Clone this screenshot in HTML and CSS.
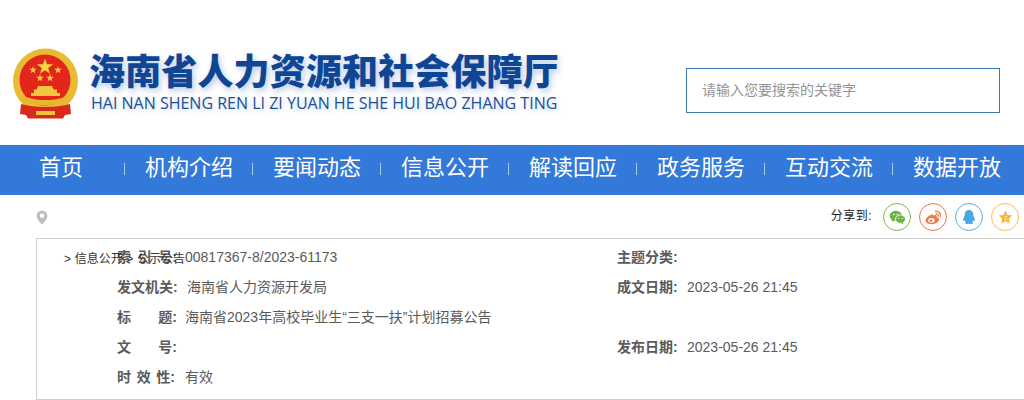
FILE: index.html
```html
<!DOCTYPE html>
<html lang="zh-CN">
<head>
  <meta charset="UTF-8">
  <title>海南省人力资源和社会保障厅</title>
  <link rel="stylesheet" href="styles.css">
</head>
<body>
  <header class="header">
    <div class="logo">
      <svg class="emblem" width="67" height="72" viewBox="0 0 67 72">
        <circle cx="33.500" cy="33" r="32.500" fill="#e9bb34"/>
        <circle cx="33" cy="32" r="25.500" fill="#e2261c"/>
        <polygon points="33,10.500 35,16.300 41.200,16.300 36.200,20 38,25.800 33,22.300 28,25.800 29.800,20 24.800,16.300 31,16.300" fill="#f8d53f"/>
        <polygon points="21,18 21.900,20.700 24.800,20.700 22.500,22.400 23.300,25.200 21,23.500 18.700,25.200 19.500,22.400 17.200,20.700 20.100,20.700" fill="#f8d53f"/>
        <polygon points="46,18 46.900,20.700 49.800,20.700 47.500,22.400 48.300,25.200 46,23.500 43.700,25.200 44.500,22.400 42.200,20.700 45.100,20.700" fill="#f8d53f"/>
        <polygon points="28,26 28.900,28.700 31.800,28.700 29.500,30.400 30.300,33.200 28,31.500 25.700,33.200 26.500,30.400 24.200,28.700 27.100,28.700" fill="#f8d53f"/>
        <polygon points="38,26 38.900,28.700 41.800,28.700 39.500,30.400 40.300,33.200 38,31.500 35.700,33.200 36.500,30.400 34.200,28.700 37.100,28.700" fill="#f8d53f"/>
        <path d="M26 38h14l1.500 3.500H45V45h3v3H19v-3h3v-3.500h2.500z" fill="#f2c63f"/>
        <path d="M8 46c7 4 15 6 25.500 6S52 50 59 46l-2 6c-6 3-14 5-23.500 5S16 55 10 52z" fill="#eab52f"/>
        <path d="M9 56c7 2 15 3 24.500 3S51 58 58 56l1 10-6 1-2 3.500H16L14 67l-6-1z" fill="#d9281e"/>
        <path d="M24 63h19v4H24z" fill="#f0c33c"/>
      </svg>
      <div class="logo-text">
        <div class="logo-cn">海南省人力资源和社会保障厅</div>
        <div class="logo-en">HAI NAN SHENG REN LI ZI YUAN HE SHE HUI BAO ZHANG TING</div>
      </div>
    </div>
    <div class="search">请输入您要搜索的关键字</div>
  </header>

  <nav class="nav">
    <a class="nav-item">首页</a>
    <a class="nav-item">机构介绍</a>
    <a class="nav-item">要闻动态</a>
    <a class="nav-item">信息公开</a>
    <a class="nav-item">解读回应</a>
    <a class="nav-item">政务服务</a>
    <a class="nav-item">互动交流</a>
    <a class="nav-item">数据开放</a>
  </nav>

  <div class="subbar">
    <svg class="pin" width="12" height="15" viewBox="0 0 12 15">
      <path d="M6 0.500a5.300 5.300 0 0 1 5.300 5.300c0 3.200-3 6.500-5.300 8.700C3.700 12.300.7 9 .7 5.800A5.300 5.300 0 0 1 6 .5zm0 3a2.300 2.300 0 1 0 0 4.600 2.300 2.300 0 0 0 0-4.600z" fill="#bdbdbd"/>
    </svg>
    <div class="share">
      <span class="share-label">分享到:</span>
      <a class="share-btn wechat">
        <svg width="17" height="15" viewBox="0 0 20 18">
          <ellipse cx="8" cy="7" rx="7.500" ry="6.200" fill="#6eb344"/>
          <path d="M3.500 10.500 3 14l3.500-2z" fill="#6eb344"/>
          <ellipse cx="13.500" cy="11" rx="6" ry="5" fill="#6eb344" stroke="#fff"/>
          <path d="M16.500 14.500 17 17l-3-1.500z" fill="#6eb344"/>
          <circle cx="5.500" cy="5.500" r="1" fill="#fff"/>
          <circle cx="10" cy="5.500" r="1" fill="#fff"/>
          <circle cx="11.500" cy="10" r=".8" fill="#fff"/>
          <circle cx="15.500" cy="10" r=".8" fill="#fff"/>
        </svg>
      </a>
      <a class="share-btn weibo">
        <svg width="17" height="15" viewBox="0 0 20 18">
          <path d="M8 5.500c-4 1-7.500 4.500-7.500 7.300C.5 15.500 4 17 8 17c4.500 0 8.500-2.500 8.500-5.500 0-1.800-1.500-2.500-2.700-2.800.5-1.500 0-2.700-1.500-2.800-1.200-.1-2.300.4-3 .8.300-1.500-.2-2.100-1.800-1.200z" fill="#ee7a4a"/>
          <ellipse cx="7.500" cy="12.500" rx="3.800" ry="2.800" fill="#fff"/>
          <circle cx="7" cy="12.800" r="1.500" fill="#ee7a4a"/>
          <path d="M12.500 1.500c3.500-.5 6.500 2.500 5.800 6.200M13 4.500c1.800-.3 3 1.200 2.700 2.800" fill="none" stroke="#ee7a4a" stroke-width="1.600" stroke-linecap="round"/>
        </svg>
      </a>
      <a class="share-btn qq">
        <svg width="14" height="16" viewBox="0 0 18 20">
          <path d="M9 1c3.500 0 5.500 2.500 5.500 6 0 1 .1 1.500.6 2.500.9 1.700 1.600 3.300 1.400 5-.2 1.200-1 1-1.900-.3-.3 1.200-.9 2-1.700 2.700 1 .4 1.600.9 1.300 1.500-.4.6-3 .8-5.200.3-2.200.5-4.800.3-5.200-.3-.3-.6.300-1.100 1.300-1.500-.8-.7-1.400-1.500-1.700-2.700-.9 1.300-1.700 1.500-1.900.3-.2-1.700.5-3.300 1.400-5 .5-1 .6-1.500.6-2.500C3.500 3.500 5.500 1 9 1z" fill="#4aa8e8"/>
        </svg>
      </a>
      <a class="share-btn star">
        <svg width="15" height="14" viewBox="0 0 20 19">
          <polygon points="10,1 12.800,6.700 19,7.500 14.500,11.900 15.600,18 10,15.100 4.400,18 5.500,11.900 1,7.500 7.200,6.700" fill="#f5b23e"/>
          <path d="M7.500 9h5l-4.500 4h5" fill="none" stroke="#fbe3b0" stroke-width="1.200"/>
        </svg>
      </a>
    </div>
  </div>

  <section class="info">
    <div class="crumb">&gt; 信息公开 &gt; 公示公告</div>
    <div class="row">
      <div class="cell"><span class="label label-short"><i>索</i><i>引</i><i>号:</i></span><span class="value">00817367-8/2023-61173</span></div>
      <div class="cell"><span class="label"><i>主题分类:</i></span></div>
    </div>
    <div class="row">
      <div class="cell"><span class="label"><i>发文机关:</i></span><span class="value value-far">海南省人力资源开发局</span></div>
      <div class="cell"><span class="label"><i>成文日期:</i></span><span class="value value-far">2023-05-26 21:45</span></div>
    </div>
    <div class="row">
      <div class="cell"><span class="label label-short"><i>标</i><i>题:</i></span><span class="value">海南省2023年高校毕业生“三支一扶”计划招募公告</span></div>
    </div>
    <div class="row">
      <div class="cell"><span class="label label-short"><i>文</i><i>号:</i></span></div>
      <div class="cell"><span class="label"><i>发布日期:</i></span><span class="value value-far">2023-05-26 21:45</span></div>
    </div>
    <div class="row">
      <div class="cell"><span class="label label-tight"><i>时</i><i>效</i><i>性:</i></span><span class="value">有效</span></div>
    </div>
  </section>
</body>
</html>
```

FILE: styles.css
```css
* {
  box-sizing: border-box;
}
html, body {
  overflow: hidden;
}
body {
  margin: 0;
  background: #fff;
  font-family: "Liberation Sans", "Noto Sans CJK SC", sans-serif;
}
.header {
  height: 145px;
  display: flex;
  justify-content: space-between;
  padding: 48px 24px 0 12px;
}
.logo {
  display: flex;
  gap: 10px;
}
.logo-cn {
  font-size: 36px;
  line-height: 41px;
  margin-top: 4px;
  letter-spacing: 0.15px;
  font-weight: 900;
  color: #0f4593;
  white-space: nowrap;
  text-shadow: 2px 3px 6px rgba(70, 120, 200, 0.4);
}
.logo-en {
  font-family: "Open Sans", sans-serif;
  font-size: 16px;
  line-height: 20px;
  margin-left: 2px;
  color: #1b4f96;
  white-space: nowrap;
  text-shadow: 1px 2px 5px rgba(70, 120, 200, 0.3);
}
.search {
  width: 314px;
  height: 45px;
  margin-top: 20px;
  padding-left: 15px;
  border: 1px solid #3f7cb5;
  font-size: 14px;
  line-height: 42px;
  color: #949494;
}
.nav {
  height: 50px;
  background: #3279d9;
  display: flex;
}
.nav-item {
  width: 128px;
  flex: none;
  position: relative;
  left: -3px;
  text-align: center;
  font-size: 22px;
  line-height: 46px;
  color: #fff;
}
.nav-item::after {
  content: "";
  position: absolute;
  right: 0;
  top: 18px;
  width: 1px;
  height: 12px;
  background: #a9c8ef;
}
.nav-item:last-child::after {
  display: none;
}
.subbar {
  height: 43px;
  display: flex;
  justify-content: space-between;
  padding: 15px 5px 0 36px;
}
.share {
  display: flex;
  align-items: flex-start;
  gap: 8px;
  margin-top: -7px;
}
.share-label {
  font-size: 12px;
  line-height: 27px;
  margin-right: 3px;
  letter-spacing: 0.5px;
  color: #222;
}
.share-btn {
  width: 28px;
  height: 28px;
  border-radius: 50%;
  display: flex;
  align-items: center;
  justify-content: center;
  border: 1px solid;
}
.wechat { border-color: #7cbb55; }
.weibo { border-color: #e9744a; }
.qq { border-color: #5baee6; }
.star { border-color: #f6bf5c; }
.info {
  position: relative;
  width: 1100px;
  height: 162px;
  margin-left: 36px;
  padding-top: 3px;
  border: 1px solid #cfcfcf;
}
.crumb {
  position: absolute;
  left: 27px;
  top: 12px;
  font-size: 12px;
  line-height: 16px;
  word-spacing: 0.3px;
  color: #333;
  white-space: nowrap;
}
.row {
  display: flex;
  height: 30px;
  padding-left: 80px;
  font-size: 14px;
  line-height: 30px;
  color: #5a5a5a;
}
.cell {
  width: 500px;
  display: flex;
}
.label {
  width: 62px;
  margin-right: 6px;
  display: flex;
  justify-content: space-between;
  font-weight: 700;
  white-space: nowrap;
}
.label-short {
  width: 60px;
  margin-right: 8px;
}
.label-tight {
  width: 58px;
  margin-right: 10px;
}
.label i {
  font-style: normal;
}
.value {
  white-space: nowrap;
}
.value-far {
  margin-left: 2px;
}
```
